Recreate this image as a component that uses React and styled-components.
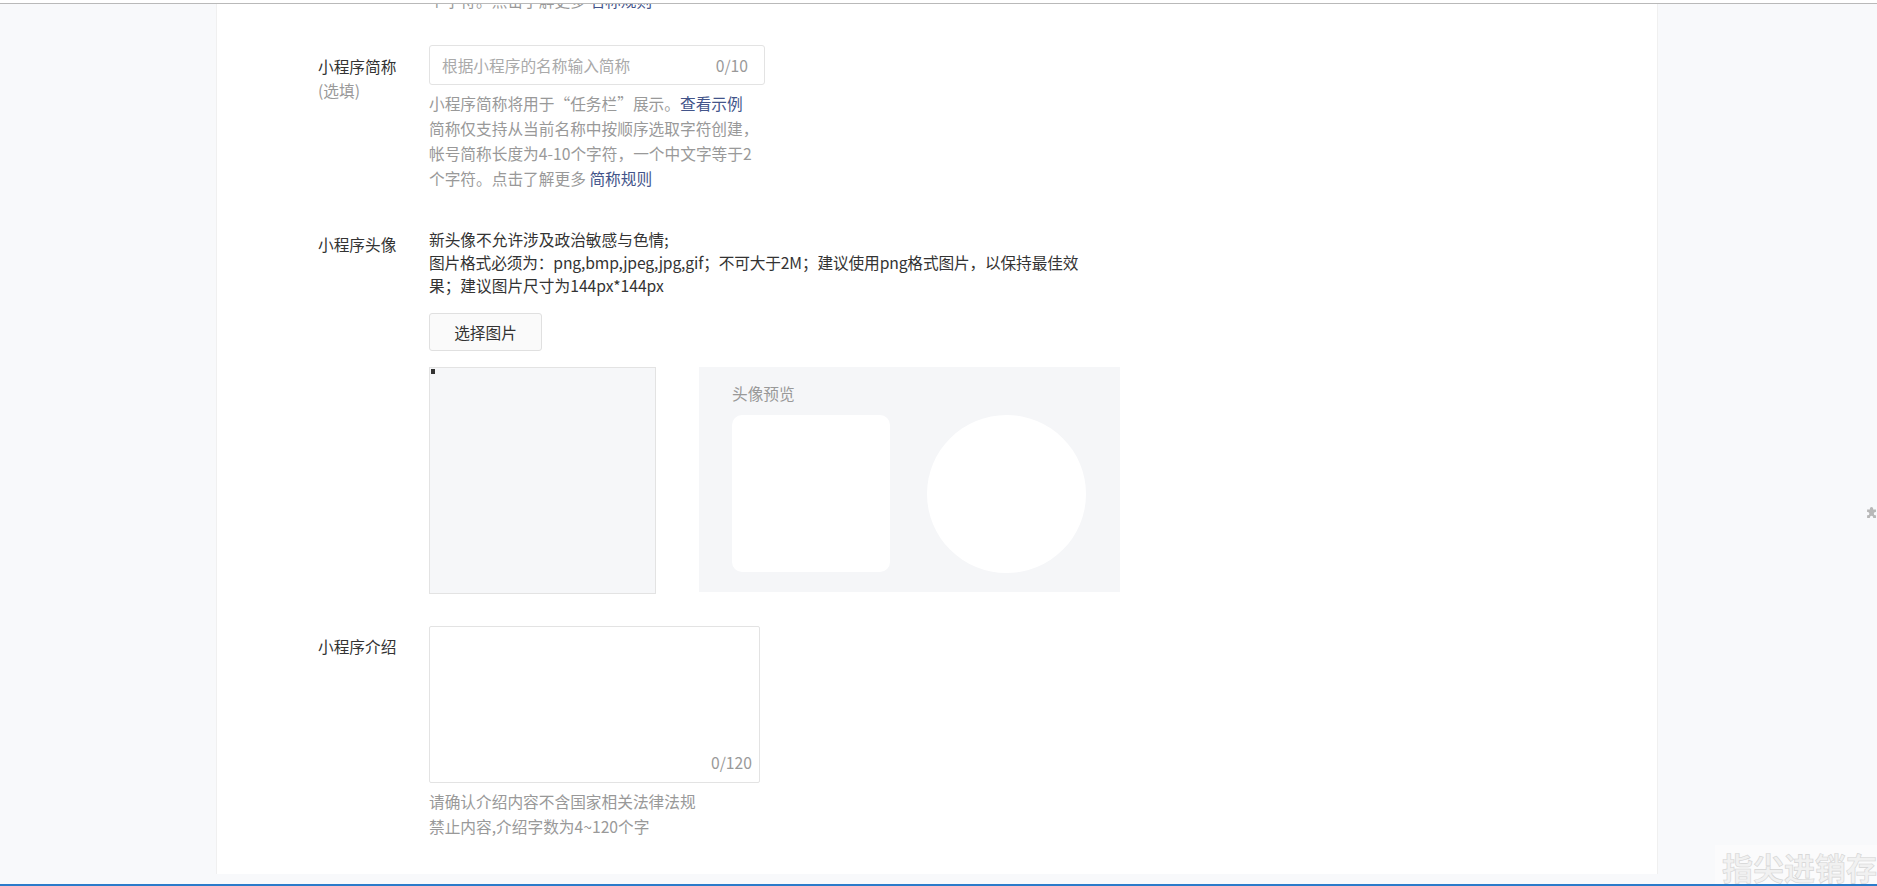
import React from 'react';
import styled, { createGlobalStyle } from 'styled-components';

const GlobalStyle = createGlobalStyle`
  html, body {
    margin: 0;
    padding: 0;
    height: 100%;
  }
  body {
    font-family: "Noto Sans CJK SC", "Noto Sans", sans-serif;
    color: #333;
  }
  * { box-sizing: border-box; }
`;

function App() {
  return (
    <Page>
      <GlobalStyle />
      <TopStrip />
      <Panel>
        <Form>
          <Row>
            <Label />
            <Help>
              个字符。点击了解更多 <Link>名称规则</Link>
            </Help>
          </Row>

          <Row>
            <Label $top={10}>
              小程序简称
              <Optional>(选填)</Optional>
            </Label>
            <Field>
              <InputBox>
                <TextInput placeholder="根据小程序的名称输入简称" />
                <Counter>0/10</Counter>
              </InputBox>
              <Help $gap={6}>
                小程序简称将用于“任务栏”展示。<Link>查看示例</Link>
                <br />
                简称仅支持从当前名称中按顺序选取字符创建，
                <br />
                帐号简称长度为4-10个字符，一个中文字等于2
                <br />
                个字符。点击了解更多 <Link>简称规则</Link>
              </Help>
            </Field>
          </Row>

          <Row $top={5}>
            <Label $top={5}>小程序头像</Label>
            <Field>
              <Notes>
                <span>新头像不允许涉及政治敏感与色情;</span>
                <NoteLatin>图片格式必须为：png,bmp,jpeg,jpg,gif；不可大于2M；建议使用png格式图片，以保持最佳效</NoteLatin>
                <span>果；建议图片尺寸为144px*144px</span>
              </Notes>
              <PickButton type="button">选择图片</PickButton>
              <AvatarArea>
                <CropBox>
                  <Handle />
                </CropBox>
                <Preview>
                  <PreviewTitle>头像预览</PreviewTitle>
                  <PreviewShapes>
                    <Thumb />
                    <Thumb $round />
                  </PreviewShapes>
                </Preview>
              </AvatarArea>
            </Field>
          </Row>

          <Row>
            <Label $top={9}>小程序介绍</Label>
            <Field>
              <AreaBox>
                <TextArea />
                <AreaCounter>0/120</AreaCounter>
              </AreaBox>
              <Help $gap={6}>
                请确认介绍内容不含国家相关法律法规
                <br />
                禁止内容,介绍字数为4~120个字
              </Help>
            </Field>
          </Row>
        </Form>
      </Panel>

      <SideIcon viewBox="0 0 12 12">
        <path
          d="M3.6 2.4a1.5 1.5 0 0 1 3 0v.8h2.6v2.4h-.5a1.5 1.5 0 0 0 0 3h.5V11H6.6v-.6a1.5 1.5 0 0 0-3 0v.6H1V8.6h.6a1.5 1.5 0 0 0 0-3H1V3.2h2.6z"
          fill="#b8b8b8"
        />
      </SideIcon>
      <Watermark>指尖进销存</Watermark>
      <BottomLine />
    </Page>
  );
}

export default App;

const Page = styled.div`
  position: relative;
  height: 100vh;
  overflow: hidden;
  background: #f8f9fb;
`;

const TopStrip = styled.div`
  position: absolute;
  top: 0;
  left: 0;
  right: 0;
  height: 4px;
  background: #fff;
  border-bottom: 1px solid #b9b9b9;
  z-index: 2;
`;

const BottomLine = styled.div`
  position: absolute;
  left: 0;
  right: 0;
  bottom: 0;
  height: 2px;
  background: #2b7bca;
  z-index: 2;
`;

const Panel = styled.main`
  margin-left: 216px;
  width: 1442px;
  height: 100%;
  background: #fff;
  border-left: 1px solid #f0f0f0;
  border-right: 1px solid #f0f0f0;
  padding-left: 101px;
`;

const Form = styled.div`
  display: flex;
  flex-direction: column;
  gap: 32px;
  margin-top: -12px;
`;

const Row = styled.div`
  display: flex;
  align-items: flex-start;
  padding-top: ${({ $top }) => $top || 0}px;
`;

const Label = styled.div`
  width: 111px;
  flex-shrink: 0;
  padding-top: ${({ $top }) => $top || 0}px;
  font-size: 15.7px;
  line-height: 24px;
  color: #333;
  display: flex;
  flex-direction: column;
`;

const Optional = styled.span`
  color: #999;
`;

const Field = styled.div`
  display: flex;
  flex-direction: column;
  align-items: flex-start;
`;

const Help = styled.p`
  margin: ${({ $gap }) => $gap || 0}px 0 0;
  font-size: 15.7px;
  line-height: 25px;
  color: #999;
  white-space: nowrap;
`;

const Link = styled.a`
  color: #43548a;
  cursor: pointer;
`;

const InputBox = styled.div`
  width: 336px;
  height: 40px;
  display: flex;
  align-items: center;
  border: 1px solid #e3e3e3;
  border-radius: 3px;
  padding: 0 16px 0 12px;
`;

const TextInput = styled.input`
  flex: 1;
  min-width: 0;
  border: none;
  outline: none;
  padding: 0;
  font-family: inherit;
  font-size: 15.7px;
  color: #333;
  background: transparent;
  &::placeholder {
    color: #aaa;
  }
`;

const Counter = styled.span`
  font-size: 15.7px;
  color: #999;
`;

const Notes = styled.div`
  display: flex;
  flex-direction: column;
  font-size: 15.7px;
  line-height: 23px;
  color: #333;
  white-space: nowrap;
`;

const NoteLatin = styled.span`
  letter-spacing: -0.15px;
`;

const PickButton = styled.button`
  margin-top: 16px;
  width: 113px;
  height: 38px;
  border: 1px solid #e0e0e0;
  border-radius: 3px;
  background: #fafafa;
  font-family: inherit;
  font-size: 15.7px;
  color: #333;
  cursor: pointer;
`;

const AvatarArea = styled.div`
  margin-top: 16px;
  display: flex;
  align-items: flex-start;
  gap: 43px;
`;

const CropBox = styled.div`
  position: relative;
  width: 227px;
  height: 227px;
  border: 1px solid #e3e3e3;
  background: #f6f7f9;
`;

const Handle = styled.span`
  position: absolute;
  top: 1px;
  left: 1px;
  width: 4px;
  height: 5px;
  background: #333;
`;

const Preview = styled.div`
  width: 421px;
  height: 225px;
  background: #f5f6f8;
  padding: 16px 0 0 33px;
`;

const PreviewTitle = styled.div`
  font-size: 15.7px;
  line-height: 22px;
  color: #999;
  margin-bottom: 10px;
`;

const PreviewShapes = styled.div`
  display: flex;
  gap: 37px;
`;

const Thumb = styled.div`
  width: ${({ $round }) => ($round ? 159 : 158)}px;
  height: ${({ $round }) => ($round ? 158 : 157)}px;
  background: #fff;
  border-radius: ${({ $round }) => ($round ? '50%' : '10px')};
`;

const AreaBox = styled.div`
  position: relative;
  width: 331px;
  height: 157px;
  border: 1px solid #e3e3e3;
  border-radius: 2px;
`;

const TextArea = styled.textarea`
  width: 100%;
  height: 100%;
  border: none;
  outline: none;
  resize: none;
  padding: 8px 12px;
  font-family: inherit;
  font-size: 15.7px;
  background: transparent;
`;

const AreaCounter = styled.span`
  position: absolute;
  right: 7px;
  bottom: 8px;
  font-size: 15.7px;
  line-height: 22px;
  color: #999;
`;

const SideIcon = styled.svg`
  position: absolute;
  left: 1866px;
  top: 506px;
  width: 13px;
  height: 13px;
`;

const Watermark = styled.div`
  position: absolute;
  right: 0;
  bottom: 2px;
  width: 162px;
  height: 39px;
  background: #fbfbfc;
  display: flex;
  align-items: flex-end;
  justify-content: flex-end;
  font-size: 31px;
  font-weight: 700;
  line-height: 34px;
  color: #f1f1f1;
  -webkit-text-stroke: 0.6px #d4d4d4;
  white-space: nowrap;
  overflow: hidden;
`;
